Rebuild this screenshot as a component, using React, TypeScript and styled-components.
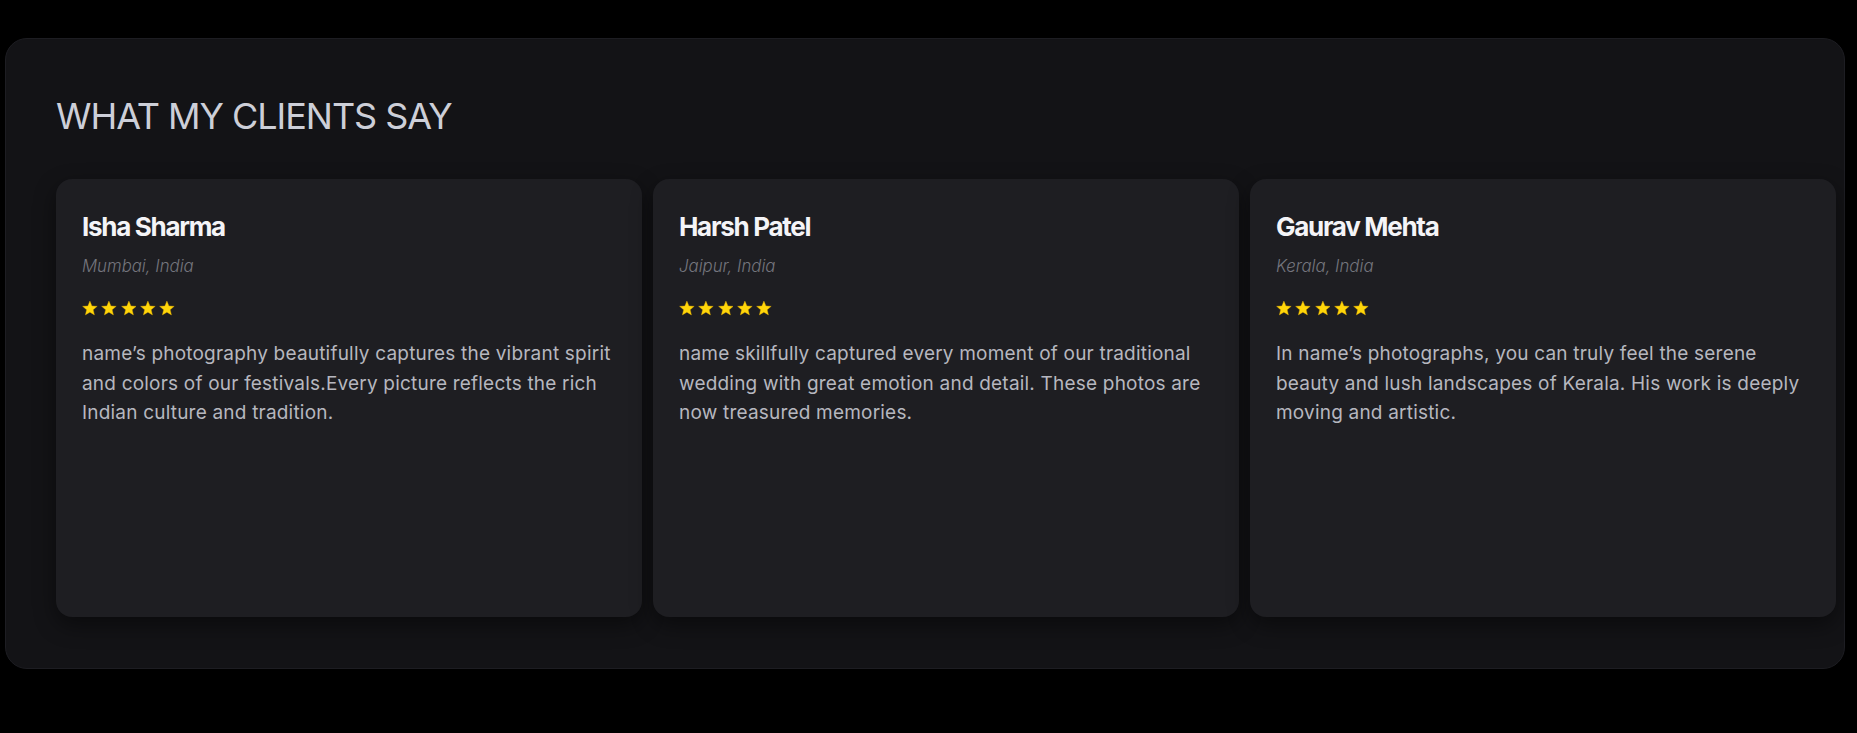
import React from "react";
import styled, { createGlobalStyle } from "styled-components";

const GlobalStyle = createGlobalStyle`
  html, body {
    margin: 0;
    padding: 0;
    background: #000000;
  }
  body {
    font-family: Inter, "Noto Sans", "Liberation Sans", sans-serif;
  }
`;

const Page = styled.main`
  padding: 38px 12px 40px 5px;
`;

const Section = styled.section`
  background: #131316;
  border: 1px solid #1d1d22;
  border-radius: 22px;
  padding: 55px 9px 50px 50px;
  box-sizing: border-box;
  height: 631px;
`;

const Heading = styled.h2`
  margin: 0 0 41px 0;
  font-size: 36px;
  line-height: 44px;
  font-weight: 400;
  letter-spacing: -1.05px;
  color: #cdcfd8;
`;

const CardRow = styled.div`
  display: grid;
  grid-template-columns: repeat(3, 586px);
  gap: 11px;
`;

const Card = styled.article`
  background: #1e1e22;
  border-radius: 16px;
  height: 438px;
  box-sizing: border-box;
  padding: 32px 24px 30px 26px;
  box-shadow: 0 8px 22px rgba(0, 0, 0, 0.45);
  display: flex;
  flex-direction: column;
`;

const Name = styled.h3`
  margin: 0;
  font-size: 26px;
  line-height: 32px;
  font-weight: 700;
  letter-spacing: -1.3px;
  color: #f4f4f7;
`;

const Location = styled.p`
  margin: 11px 0 0 0;
  font-size: 16.8px;
  line-height: 24px;
  font-style: italic;
  font-weight: 300;
  color: #74757d;
`;

const Stars = styled.div`
  display: flex;
  gap: 3.5px;
  margin-top: 22px;
  height: 16px;
`;

const Quote = styled.p`
  margin: 23px 0 0 0;
  font-size: 19px;
  line-height: 29.5px;
  font-weight: 400;
  letter-spacing: 0.2px;
  color: #b6b7bf;
`;

const Star = () => (
  <svg width="15.8" height="16" viewBox="0 0 24 24" aria-hidden="true">
    <path
      d="M12 1.5l3.1 7.4 8 .6-6.1 5.2 1.9 7.8L12 18.3l-6.9 4.2 1.9-7.8L.9 9.5l8-.6z"
      fill="#ffd60a"
      stroke="#e0a800"
      strokeWidth="0.6"
    />
  </svg>
);

const testimonials = [
  {
    name: "Isha Sharma",
    place: "Mumbai, India",
    text: "name’s photography beautifully captures the vibrant spirit and colors of our festivals.Every picture reflects the rich Indian culture and tradition.",
  },
  {
    name: "Harsh Patel",
    place: "Jaipur, India",
    text: "name skillfully captured every moment of our traditional wedding with great emotion and detail. These photos are now treasured memories.",
  },
  {
    name: "Gaurav Mehta",
    place: "Kerala, India",
    text: "In name’s photographs, you can truly feel the serene beauty and lush landscapes of Kerala. His work is deeply moving and artistic.",
  },
];

export default function App() {
  return (
    <>
      <GlobalStyle />
      <Page>
        <Section>
          <Heading>WHAT MY CLIENTS SAY</Heading>
          <CardRow>
            {testimonials.map((t) => (
              <Card key={t.name}>
                <Name>{t.name}</Name>
                <Location>{t.place}</Location>
                <Stars>
                  {[0, 1, 2, 3, 4].map((i) => (
                    <Star key={i} />
                  ))}
                </Stars>
                <Quote>{t.text}</Quote>
              </Card>
            ))}
          </CardRow>
        </Section>
      </Page>
    </>
  );
}
